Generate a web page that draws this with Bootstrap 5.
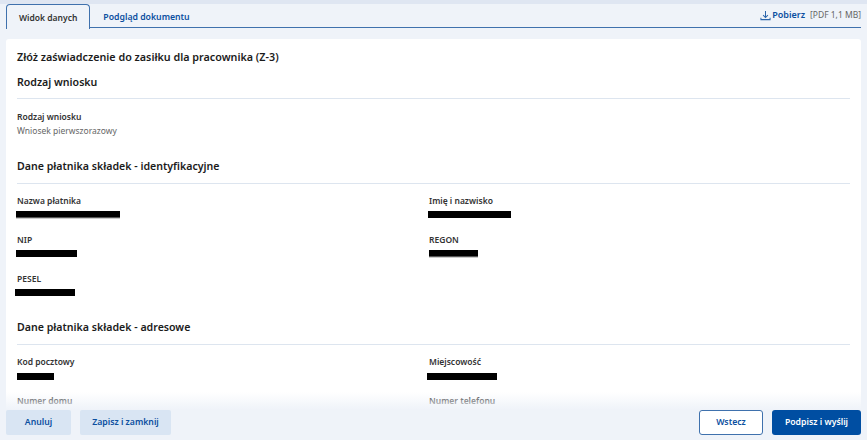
<!DOCTYPE html>
<html lang="pl">
<head>
  <meta charset="UTF-8" />
  <meta name="viewport" content="width=device-width, initial-scale=1.0"/>
  <title>Złóż zaświadczenie</title>
  <link href="https://cdn.jsdelivr.net/npm/bootstrap@5.3.2/dist/css/bootstrap.min.css" rel="stylesheet">
  <style>
    html, body { height: 100%; overflow: hidden; }
    body { background: #eff3f9; font-family: "Noto Sans", "Open Sans", sans-serif; color: #1b1b1b; position: relative; }
    .top-shade { height: 4px; background: #dfe6f2; }
    .tabs-row { height: 24px; margin: 0 6px; border-bottom: 1.5px solid #3f71ad; }
    .tab-item { font-size: 8.7px; font-weight: 600; padding: 1px 13px 0; line-height: 24px; color: #0b4fa0; text-decoration: none; }
    .tab-item.tab-on { height: 25px; color: #333; background: #eff3f9; border: 1.5px solid #3f71ad; border-bottom: 0; border-radius: 4px 4px 0 0; padding: 0 12px; line-height: 26px; font-size: 8.5px; }
    .tools-box { height: 22px; }
    .get-link { font-size: 9px; font-weight: 600; color: #0b4fa0; }
    .get-size { font-size: 8.5px; color: #666; margin-left: 5px; }
    .get-icon { margin-right: 1px; }
    .sheet { margin: 11px 6px 0; background: #fff; border-radius: 3px 3px 0 0; padding: 10px 11px 0 11px; height: 420px; }
    .form-title { font-size: 10.75px; font-weight: 600; line-height: 16px; margin: 0; }
    .sec-title { font-size: 10.6px; font-weight: 600; line-height: 16px; margin: 0; }
    .sec-first { margin-top: 9px; }
    .sec-second { margin-top: 21px; }
    .sec-third { margin-top: 7px; }
    .sec-line { border-top: 1px solid #dde5ef; margin-top: 8px; }
    .sec-line.line-wide { margin-top: 9px; }
    .fields-top { margin-top: 12px; }
    .fields-addr { margin-top: 11px; }
    .fld-label { font-size: 8.5px; font-weight: 600; line-height: 12px; color: #333; }
    .fld-value { font-size: 8.5px; line-height: 12px; color: #666; margin-top: 2px; }
    .blackout { height: 7px; background: #000; margin-top: 4px; margin-left: -1px; }
    .blackout.has-rest { border-bottom: 1px solid #555; box-shadow: 0 1px 0 #ccc; }
    .bar-name { width: 104px; }
    .bar-nip { width: 61px; }
    .bar-pesel { width: 60px; margin-left: -2px; }
    .bar-person { width: 83px; }
    .bar-regon { width: 49px; margin-left: 0; }
    .bar-post { width: 37px; margin-left: 0; margin-top: 5px; }
    .bar-city { width: 70px; margin-left: -2px; margin-top: 5px; }
    .fld { height: 39px; }
    .col-left { width: 412px; }
    .fade-bottom { position: absolute; left: 0; right: 0; bottom: 0; height: 48px; padding: 0 6px 5px; background: linear-gradient(to bottom, rgba(239,243,249,0) 0, rgba(239,243,249,.55) 10px, rgba(239,243,249,.8) 14px, #eff3f9 18px); }
    .btn-soft { font-size: 8.7px; font-weight: 600; height: 25px; padding: 0; color: #0b4fa0; background: #d9e5f3; border: 0; border-radius: 2px; }
    .soft-cancel { width: 65px; }
    .soft-save { width: 91px; }
    .btn-back { font-size: 8.7px; font-weight: 600; height: 25px; width: 64px; padding: 0; color: #0b4fa0; background: #fff; border: 1.5px solid #3f71ad; border-radius: 3px; }
    .btn-send { font-size: 8.7px; font-weight: 600; height: 25px; width: 89px; padding: 0; color: #fff; background: #004ea2; border: 0; border-radius: 3px; }
    .btn-gap { gap: 9px; }
  </style>
</head>
<body>
  <div class="top-shade"></div>
  <div class="tabs-row d-flex justify-content-between align-items-start">
    <div class="d-flex">
      <a class="tab-item tab-on" href="#">Widok danych</a>
      <a class="tab-item" href="#">Podgląd dokumentu</a>
    </div>
    <div class="tools-box d-flex align-items-center">
      <svg class="get-icon" width="11" height="11" viewBox="0 0 12 12" fill="none" stroke="#2b65ab" stroke-width="1.1"><path d="M6 1v7M3.4 5.6 6 8.2l2.6-2.6M1 8.5v2h10v-2"/></svg>
      <span class="get-link">Pobierz</span>
      <span class="get-size">[PDF 1,1 MB]</span>
    </div>
  </div>

  <div class="sheet">
    <h1 class="form-title">Złóż zaświadczenie do zasiłku dla pracownika (Z-3)</h1>
    <h2 class="sec-title sec-first">Rodzaj wniosku</h2>
    <div class="sec-line"></div>
    <div class="fld-label fields-top">Rodzaj wniosku</div>
    <div class="fld-value">Wniosek pierwszorazowy</div>

    <h2 class="sec-title sec-second">Dane płatnika składek - identyfikacyjne</h2>
    <div class="sec-line line-wide"></div>
    <div class="d-flex fields-addr">
      <div class="col-left">
        <div class="fld"><div class="fld-label">Nazwa płatnika</div><div class="blackout has-rest bar-name"></div></div>
        <div class="fld"><div class="fld-label">NIP</div><div class="blackout bar-nip"></div></div>
        <div class="fld"><div class="fld-label">PESEL</div><div class="blackout bar-pesel"></div></div>
      </div>
      <div>
        <div class="fld"><div class="fld-label">Imię i nazwisko</div><div class="blackout bar-person"></div></div>
        <div class="fld"><div class="fld-label">REGON</div><div class="blackout has-rest bar-regon"></div></div>
      </div>
    </div>

    <h2 class="sec-title sec-third">Dane płatnika składek - adresowe</h2>
    <div class="sec-line line-wide"></div>
    <div class="d-flex fields-addr">
      <div class="col-left">
        <div class="fld"><div class="fld-label">Kod pocztowy</div><div class="blackout bar-post"></div></div>
        <div class="fld"><div class="fld-label">Numer domu</div></div>
      </div>
      <div>
        <div class="fld"><div class="fld-label">Miejscowość</div><div class="blackout bar-city"></div></div>
        <div class="fld"><div class="fld-label">Numer telefonu</div></div>
      </div>
    </div>
  </div>

  <div class="fade-bottom d-flex justify-content-between align-items-end">
    <div class="d-flex btn-gap">
      <button class="btn btn-soft soft-cancel">Anuluj</button>
      <button class="btn btn-soft soft-save">Zapisz i zamknij</button>
    </div>
    <div class="d-flex btn-gap">
      <button class="btn btn-back">Wstecz</button>
      <button class="btn btn-send">Podpisz i wyślij</button>
    </div>
  </div>
  <script src="https://cdn.jsdelivr.net/npm/bootstrap@5.3.2/dist/js/bootstrap.bundle.min.js"></script>
</body>
</html>
